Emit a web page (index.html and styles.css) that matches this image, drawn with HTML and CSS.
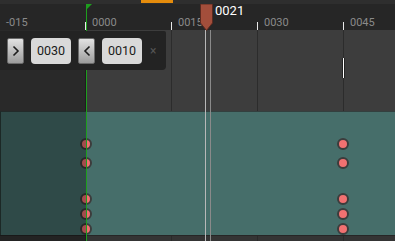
FILE: index.html
```html
<!DOCTYPE html>
<html>
<head>
<meta charset="utf-8">
<link rel="stylesheet" href="styles.css">
</head>
<body>
<div class="app">
  <div class="topstrip"><div class="thumb"></div></div>
  <div class="ruler">
    <div class="cell"><span>-015</span></div>
    <div class="cell"><span>0000</span></div>
    <div class="cell"><span>0015</span></div>
    <div class="cell"><span>0030</span></div>
    <div class="cell"><span>0045</span></div>
  </div>
  <div class="track empty"></div>
  <div class="track keys">
    <i class="key" style="left:80px;top:27px"></i>
    <i class="key" style="left:80px;top:46px"></i>
    <i class="key" style="left:80px;top:82px"></i>
    <i class="key" style="left:80px;top:97px"></i>
    <i class="key" style="left:80px;top:112px"></i>
    <i class="key" style="left:337px;top:27px"></i>
    <i class="key" style="left:337px;top:46px"></i>
    <i class="key" style="left:337px;top:82px"></i>
    <i class="key" style="left:337px;top:97px"></i>
    <i class="key" style="left:337px;top:112px"></i>
  </div>
  <div class="footer"></div>

  <div class="shade"></div>
  <div class="endmark"></div>
  <div class="startline"></div>
  <svg class="startflag" width="6" height="6" viewBox="0 0 6 6"><polygon points="0,0 6,0 3,3 0,6" fill="#1e9e1e"/></svg>
  <div class="phline a"></div>
  <div class="phline b"></div>
  <svg class="playhead" width="13" height="27" viewBox="0 0 13 27"><polygon points="0.5,0 12.5,0 12.5,19 6.5,26.5 0.5,19" fill="#a34e3b" stroke="#5a2a20" stroke-width="1"/></svg>
  <div class="phlabel">0021</div>

  <div class="popup">
    <button class="chev"><svg width="8" height="12" viewBox="0 0 8 12"><polyline points="1.5,1.5 6,6 1.5,10.5" fill="none" stroke="#1c1c1c" stroke-width="1.6"/></svg></button>
    <div class="num">0030</div>
    <button class="chev"><svg width="8" height="12" viewBox="0 0 8 12"><polyline points="6.5,1.5 2,6 6.5,10.5" fill="none" stroke="#1c1c1c" stroke-width="1.6"/></svg></button>
    <div class="num">0010</div>
    <span class="close">×</span>
  </div>
</div>
</body>
</html>
```

FILE: styles.css
```css
* { box-sizing: border-box; }
html, body { margin: 0; padding: 0; }
body {
  width: 395px;
  height: 241px;
  overflow: hidden;
  background: #3d3d3d;
  font-family: Roboto, "Liberation Sans", sans-serif;
}
.app {
  position: relative;
  width: 395px;
  height: 241px;
  display: flex;
  flex-direction: column;
  overflow: hidden;
}
.topstrip {
  height: 4px;
  background: #2e2e2e;
  padding-left: 141px;
  flex: none;
}
.thumb {
  width: 32px;
  height: 3px;
  background: #e58c0c;
}
.ruler {
  height: 26px;
  background: #262626;
  display: flex;
  margin-left: -1px;
  flex: none;
}
.cell {
  position: relative;
  width: 86px;
  flex: none;
  border-left: 1px solid transparent;
}
.cell::before {
  content: "";
  position: absolute;
  left: -1px;
  bottom: 0;
  width: 1px;
  height: 8px;
  background: #e8e8e8;
}
.cell span {
  display: block;
  padding: 12px 0 0 6px;
  font-size: 11px;
  line-height: 13px;
  color: #8a8a8a;
}
.track {
  position: relative;
  flex: none;
}
.track.empty {
  height: 81px;
  background-color: #3d3d3d;
  background-image: linear-gradient(to right, #2c2c2c 0 1px, transparent 1px);
  background-size: 86px 100%;
  background-position: 85px 0;
}
.track.keys {
  height: 124px;
  background-color: #466e6a;
  border-top: 1px solid #33403f;
  border-left: 1px solid #2a3b39;
}
.footer {
  flex: 1;
  background-color: #343434;
  border-top: 1px solid #262626;
  background-image: linear-gradient(to right, #2a2a2a 0 1px, transparent 1px);
  background-size: 86px 100%;
  background-position: 85px 0;
}
.key {
  position: absolute;
  width: 12px;
  height: 12px;
  border-radius: 50%;
  background: #f27171;
  border: 2px solid #3c3c3c;
}
.track.keys .key { margin-left: -1px; margin-top: -1px; }
.shade {
  position: absolute;
  left: 0;
  top: 30px;
  width: 86px;
  bottom: 0;
  background: rgba(0, 0, 0, 0.32);
}
.endmark {
  position: absolute;
  left: 342px;
  top: 58px;
  width: 3px;
  height: 20px;
  background: #fff;
  border-left: 1px solid #222;
  border-right: 1px solid #222;
}
.startline {
  position: absolute;
  left: 86px;
  top: 4px;
  bottom: 0;
  width: 1px;
  background: #1e9e1e;
}
.startflag {
  position: absolute;
  left: 86px;
  top: 4px;
}
.phline {
  position: absolute;
  top: 30px;
  bottom: 0;
  width: 1px;
}
.phline.a { left: 205px; background: #b8b8b8; }
.phline.b { left: 210px; background: #8a8a8a; }
.playhead {
  position: absolute;
  left: 200px;
  top: 4px;
}
.phlabel {
  position: absolute;
  left: 215px;
  top: 3px;
  font-size: 13px;
  line-height: 16px;
  color: #fff;
}
.popup {
  position: absolute;
  left: 0;
  top: 31px;
  width: 166px;
  height: 39px;
  background: #232323;
  border-radius: 0 2px 4px 0;
  display: flex;
  align-items: center;
  padding-left: 7px;
  gap: 7px;
}
.chev {
  width: 17px;
  height: 26px;
  padding: 0;
  margin: 0;
  border: 1px solid #6a6a6a;
  border-radius: 2px;
  background: linear-gradient(#e2e2e2, #9c9c9c);
  display: flex;
  align-items: center;
  justify-content: center;
}
.num {
  width: 40px;
  height: 26px;
  border-radius: 4px;
  background: #d9d9d9;
  color: #1a1a1a;
  font-size: 12.5px;
  line-height: 26px;
  text-align: center;
}
.close {
  margin-left: 1px;
  font-size: 12px;
  color: #555;
  line-height: 26px;
}
```
